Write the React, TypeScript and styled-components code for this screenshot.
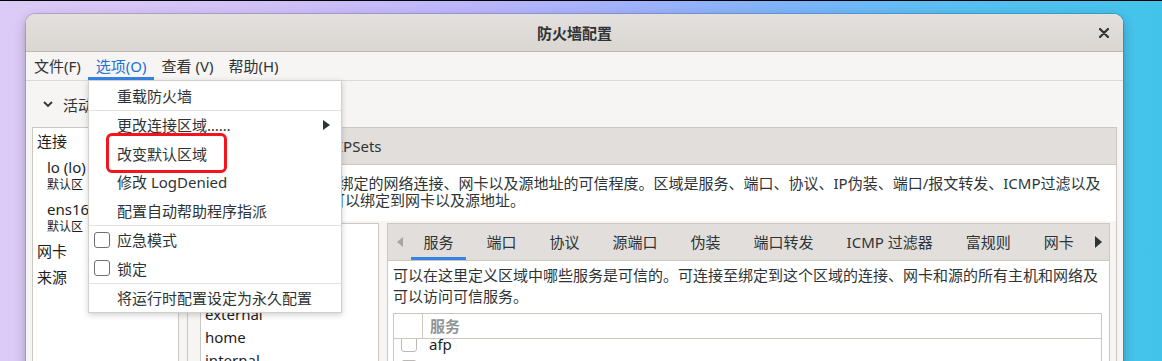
import React from "react";
import styled, { createGlobalStyle } from "styled-components";

const GlobalStyle = createGlobalStyle`
  html, body {
    margin: 0;
    padding: 0;
    overflow: hidden;
  }
  body {
    font-family: "Noto Sans", "Noto Sans CJK SC", sans-serif;
  }
`;

const Desktop = styled.div`
  width: 1162px;
  height: 361px;
  box-sizing: border-box;
  border-top: 1px solid #000;
  padding: 13px 0 0 26px;
  overflow: hidden;
  background: linear-gradient(
    90deg,
    #dccbf6 0%,
    #d2c1f8 22%,
    #bdb6fc 40%,
    #9fb2fd 55%,
    #7db4fb 68%,
    #58bff3 82%,
    #42c4ea 100%
  );
`;

const Window = styled.div`
  position: relative;
  width: 1097px;
  height: 400px;
  border-radius: 9px 9px 0 0;
  overflow: hidden;
  background: #f6f5f4;
  color: #2e3436;
  font-size: 15px;
  box-shadow: 0 0 0 1px rgba(0, 0, 0, 0.14), 0 4px 12px rgba(0, 0, 0, 0.28);
`;

const TitleBar = styled.div`
  height: 37px;
  display: grid;
  grid-template-columns: 1fr auto 1fr;
  align-items: center;
  background: linear-gradient(#e3e0dd, #dad6d2);
  border-bottom: 1px solid #bfb8b1;
`;

const Title = styled.div`
  grid-column: 2;
  font-weight: bold;
  font-size: 15px;
  color: #2e3436;
`;

const CloseButton = styled.div`
  grid-column: 3;
  justify-self: end;
  margin-right: 14px;
  width: 10px;
  height: 10px;
  display: flex;
`;

const MenuBar = styled.div`
  height: 28px;
  display: flex;
  border-bottom: 1px solid #dcd8d4;
`;

const MenuBarItem = styled.div<{ $active?: boolean }>`
  padding: 0 7px 0 8px;
  line-height: 28px;
  color: ${(p) => (p.$active ? "#1c71d8" : "#2e3436")};
  box-shadow: ${(p) => (p.$active ? "inset 0 -3px #3584e4" : "none")};
`;

const Body = styled.div`
  padding: 0 6px;
`;

const Expander = styled.div`
  height: 46px;
  display: flex;
  align-items: center;
  gap: 10px;
  padding-left: 11px;
`;

const Main = styled.div`
  display: flex;
  gap: 8px;
  height: 280px;
`;

const LeftPanel = styled.div`
  width: 147px;
  box-sizing: border-box;
  border: 1px solid #cdc7c2;
  background: #fff;
  color: #1e1e1e;
`;

const SectionRow = styled.div`
  height: 26px;
  line-height: 26px;
  padding-left: 4px;
`;

const ConnItem = styled.div`
  padding: 3px 0 3px 14px;
`;

const ConnName = styled.div`
  line-height: 20px;
  white-space: nowrap;
`;

const ConnSub = styled.div`
  line-height: 16px;
  font-size: 12px;
  white-space: nowrap;
`;

const Notebook = styled.div`
  flex: 1;
  box-sizing: border-box;
  border: 1px solid #cdc7c2;
  background: #fff;
  display: flex;
  flex-direction: column;
  min-width: 0;
`;

const TabBar = styled.div`
  height: 36px;
  display: flex;
  background: #e1dedb;
  border-bottom: 1px solid #cdc7c2;
  flex-shrink: 0;
`;

const TabStrip = styled.div<{ $gap: number; $lead?: number }>`
  flex: 1;
  display: flex;
  gap: ${(p) => p.$gap}px;
  padding-left: ${(p) => p.$lead ?? 0}px;
  overflow: hidden;
  min-width: 0;
`;

const Tab = styled.div<{ $active?: boolean; $pad?: number }>`
  padding: 0 ${(p) => p.$pad ?? 12.5}px;
  line-height: 36px;
  white-space: nowrap;
  flex-shrink: 0;
  color: #2e3436;
  box-shadow: ${(p) => (p.$active ? "inset 0 -3px #3584e4" : "none")};
`;

const ArrowButton = styled.div<{ $width: number }>`
  width: ${(p) => p.$width}px;
  flex-shrink: 0;
  display: flex;
  align-items: center;
  justify-content: center;
`;

const ZoneDesc = styled.div`
  padding: 10px 7px 12px 7px;
  line-height: 17px;
  white-space: nowrap;
  overflow: hidden;
`;

const Lower = styled.div`
  flex: 1;
  display: flex;
  gap: 8px;
  padding: 2px 6px 0 12px;
  background: #f6f5f4;
  min-height: 0;
`;

const ZoneList = styled.div`
  width: 179px;
  box-sizing: border-box;
  border: 1px solid #cdc7c2;
  background: #fff;
  padding-top: 9.5px;
  overflow: hidden;
`;

const ZoneItem = styled.div`
  line-height: 23px;
  padding-left: 4px;
  color: #1e1e1e;
`;

const InnerNotebook = styled(Notebook)`
  border-bottom: none;
`;

const InnerPage = styled.div`
  padding: 4px 7px 0 5px;
  flex: 1;
  display: flex;
  flex-direction: column;
  min-height: 0;
`;

const InnerDesc = styled.div`
  line-height: 21px;
  white-space: nowrap;
  overflow: hidden;
  color: #2e3436;
`;

const Table = styled.div`
  margin-top: 6px;
  flex: 1;
  border: 1px solid #cdc7c2;
  border-bottom: none;
  display: flex;
  flex-direction: column;
  min-height: 0;
`;

const TableHeader = styled.div`
  height: 24px;
  display: flex;
  border-bottom: 1px solid #cdc7c2;
  flex-shrink: 0;
`;

const HeaderCheckCell = styled.div`
  width: 28px;
  border-right: 1px solid #cdc7c2;
`;

const HeaderCell = styled.div`
  padding-left: 7px;
  line-height: 24px;
  font-weight: bold;
  color: #919494;
`;

const TableBody = styled.div`
  flex: 1;
  overflow: hidden;
`;

const TableRows = styled.div`
  margin-top: -7px;
`;

const Row = styled.div`
  height: 24px;
  display: flex;
  align-items: center;
  gap: 12px;
  padding-left: 7px;
  color: #1e1e1e;
`;

const Check = styled.div<{ $light?: boolean }>`
  width: 14px;
  height: 14px;
  border: 1px solid ${(p) => (p.$light ? "#bcb8b4" : "#6f6e73")};
  border-radius: 3px;
  background: #fff;
  flex-shrink: 0;
`;

const DropMenu = styled.div`
  position: absolute;
  left: 62px;
  top: 66px;
  width: 254px;
  box-sizing: border-box;
  background: #fff;
  border: 1px solid #d3cfcb;
  box-shadow: 0 2px 6px rgba(0, 0, 0, 0.18);
  color: #2e3436;
`;

const MenuItem = styled.div`
  position: relative;
  height: 28.5px;
  display: flex;
  align-items: center;
  padding: 0 11px 0 28px;
  white-space: nowrap;
`;

const CheckMenuItem = styled(MenuItem)`
  padding-left: 5px;
  gap: 7px;
`;

const SubArrow = styled.div`
  margin-left: auto;
  display: flex;
`;

const Separator = styled.div`
  height: 1px;
  background: #e3e0dd;
`;

const Highlight = styled.div`
  position: absolute;
  left: 17px;
  top: -6px;
  width: 121px;
  height: 40px;
  box-sizing: border-box;
  border: 3px solid #f5141b;
  border-radius: 6px;
`;

const innerTabs = ["服务", "端口", "协议", "源端口", "伪装", "端口转发", "ICMP 过滤器", "富规则", "网卡", "来源"];
const zones = ["block", "dmz", "drop", "external", "home", "internal", "nm-shared", "public", "trusted", "work"];

const App: React.FC = () => {
    return (
        <Desktop>
            <GlobalStyle />
            <Window>
                <TitleBar>
                    <Title>防火墙配置</Title>
                    <CloseButton>
                        <svg width="10" height="10" viewBox="0 0 10 10">
                            <path d="M1 1 L9 9 M9 1 L1 9" stroke="#2e3436" strokeWidth="2.2" strokeLinecap="round" />
                        </svg>
                    </CloseButton>
                </TitleBar>

                <MenuBar>
                    <MenuBarItem>文件(F)</MenuBarItem>
                    <MenuBarItem $active>选项(O)</MenuBarItem>
                    <MenuBarItem>查看 (V)</MenuBarItem>
                    <MenuBarItem>帮助(H)</MenuBarItem>
                </MenuBar>

                <Body>
                    <Expander>
                        <svg width="10" height="7" viewBox="0 0 10 7">
                            <polyline points="1,1 5,5 9,1" fill="none" stroke="#2e3436" strokeWidth="1.8" />
                        </svg>
                        <span>活动绑定</span>
                    </Expander>

                    <Main>
                        <LeftPanel>
                            <SectionRow>连接</SectionRow>
                            <ConnItem>
                                <ConnName>lo (lo)</ConnName>
                                <ConnSub>默认区</ConnSub>
                            </ConnItem>
                            <ConnItem>
                                <ConnName>ens160 (ens160)</ConnName>
                                <ConnSub>默认区</ConnSub>
                            </ConnItem>
                            <SectionRow>网卡</SectionRow>
                            <SectionRow>来源</SectionRow>
                        </LeftPanel>

                        <Notebook>
                            <TabBar>
                                <TabStrip $gap={10} $lead={10}>
                                    <Tab $active $pad={12}>区域</Tab>
                                    <Tab $pad={12}>服务</Tab>
                                    <Tab $pad={12}>IPSets</Tab>
                                </TabStrip>
                            </TabBar>
                            <ZoneDesc>
                                FirewallD 区域定义了绑定的网络连接、网卡以及源地址的可信程度。区域是服务、端口、协议、IP伪装、端口/报文转发、ICMP过滤以及
                                <br />
                                富规则的组合。区域可以绑定到网卡以及源地址。
                            </ZoneDesc>
                            <Lower>
                                <ZoneList>
                                    {zones.map((z) => (
                                        <ZoneItem key={z}>{z}</ZoneItem>
                                    ))}
                                </ZoneList>
                                <InnerNotebook>
                                    <TabBar>
                                        <ArrowButton $width={23}>
                                            <svg width="6" height="10" viewBox="0 0 6 10">
                                                <polygon points="6,0 0,5 6,10" fill="#a8a6a3" />
                                            </svg>
                                        </ArrowButton>
                                        <TabStrip $gap={8}>
                                            {innerTabs.map((t, i) => (
                                                <Tab key={t} $active={i === 0}>{t}</Tab>
                                            ))}
                                        </TabStrip>
                                        <ArrowButton $width={22}>
                                            <svg width="7" height="12" viewBox="0 0 7 12">
                                                <polygon points="0,0 7,6 0,12" fill="#2e3436" />
                                            </svg>
                                        </ArrowButton>
                                    </TabBar>
                                    <InnerPage>
                                        <InnerDesc>
                                            可以在这里定义区域中哪些服务是可信的。可连接至绑定到这个区域的连接、网卡和源的所有主机和网络及
                                            <br />
                                            可以访问可信服务。
                                        </InnerDesc>
                                        <Table>
                                            <TableHeader>
                                                <HeaderCheckCell />
                                                <HeaderCell>服务</HeaderCell>
                                            </TableHeader>
                                            <TableBody>
                                                <TableRows>
                                                    <Row>
                                                        <Check $light />
                                                        <span>afp</span>
                                                    </Row>
                                                    <Row>
                                                        <Check $light />
                                                        <span>alvr</span>
                                                    </Row>
                                                </TableRows>
                                            </TableBody>
                                        </Table>
                                    </InnerPage>
                                </InnerNotebook>
                            </Lower>
                        </Notebook>
                    </Main>
                </Body>

                <DropMenu>
                    <MenuItem>重载防火墙</MenuItem>
                    <Separator />
                    <MenuItem>
                        更改连接区域……
                        <SubArrow>
                            <svg width="7" height="10" viewBox="0 0 7 10">
                                <polygon points="0,0 7,5 0,10" fill="#2e3436" />
                            </svg>
                        </SubArrow>
                    </MenuItem>
                    <MenuItem>
                        改变默认区域
                        <Highlight />
                    </MenuItem>
                    <MenuItem>修改 LogDenied</MenuItem>
                    <MenuItem>配置自动帮助程序指派</MenuItem>
                    <Separator />
                    <CheckMenuItem>
                        <Check />
                        应急模式
                    </CheckMenuItem>
                    <CheckMenuItem>
                        <Check />
                        锁定
                    </CheckMenuItem>
                    <Separator />
                    <MenuItem>将运行时配置设定为永久配置</MenuItem>
                </DropMenu>
            </Window>
        </Desktop>
    );
};

export default App;
